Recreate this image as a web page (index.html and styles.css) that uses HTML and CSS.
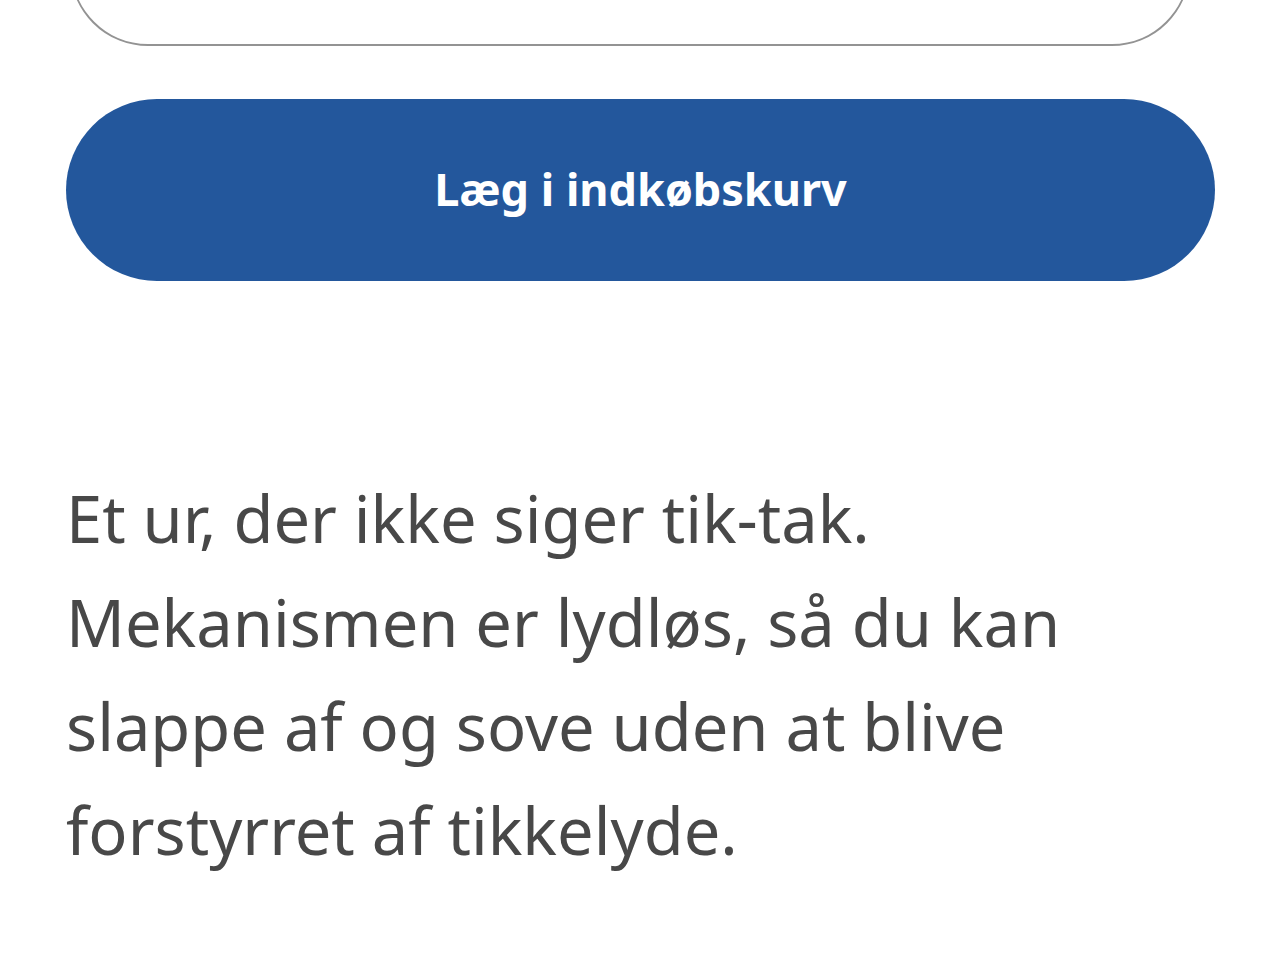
FILE: index.html
```html
<!DOCTYPE html>
<html lang="da">
<head>
    <meta charset="UTF-8">
    <meta name="viewport" content="width=device-width, initial-scale=1.0">
    <title>Vækkeur</title>
    <link rel="stylesheet" href="styles.css">
</head>
<body>

    <!-- Nederste del af antal-vælgeren -->
    <div class="qty-box"></div>

    <button class="cart-button">Læg i indkøbskurv</button>

    <p class="product-text">
        Et ur, der ikke siger tik-tak.<br>
        Mekanismen er lydløs, så du kan<br>
        slappe af og sove uden at blive<br>
        forstyrret af tikkelyde.
    </p>

</body>
</html>
```

FILE: styles.css
```css
body {
    font-family: 'Noto Sans', 'Open Sans', sans-serif;
    background-color: #ffffff;
    margin: 0;
    overflow: hidden;
}

.qty-box {
    box-sizing: border-box;
    height: 160px;
    margin-top: -114px;
    margin-left: 70px;
    width: 1120px;
    border: 2px solid #939393;
    border-radius: 78px;
}

.cart-button {
    display: block;
    box-sizing: border-box;
    margin: 53px 0 0 66px;
    padding: 0 0 4px 0;
    width: 1149px;
    height: 182px;
    border: none;
    border-radius: 91px;
    background-color: #23579c;
    color: #ffffff;
    font-family: 'Noto Sans', sans-serif;
    font-size: 45px;
    font-weight: bold;
    cursor: pointer;
}

.product-text {
    margin: 185px 0 0 66px;
    font-size: 65px;
    line-height: 104px;
    color: #484848;
}
```
